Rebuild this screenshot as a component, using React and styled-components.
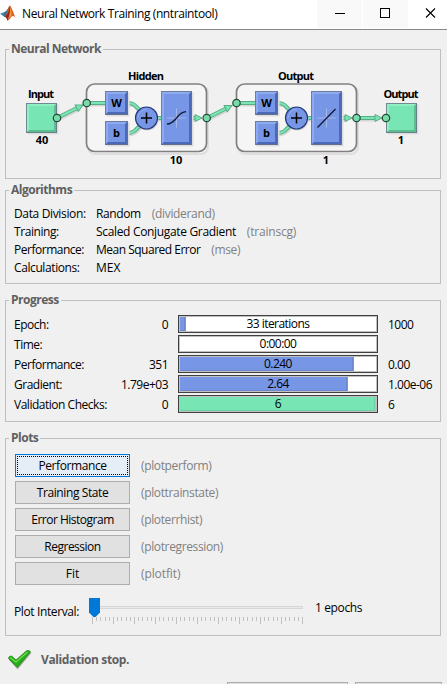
import React from "react";
import styled, { createGlobalStyle } from "styled-components";

const Global = createGlobalStyle`
  * { box-sizing: border-box; }
  body { margin: 0; background: #f0f0f0; overflow: hidden; }
`;

const Window = styled.main`
  width: 447px;
  height: 684px;
  overflow: hidden;
  background: #f0f0f0;
  color: #000;
  font: 12px/18px "Open Sans", "Noto Sans", sans-serif;
  white-space: nowrap;
`;

const TitleBar = styled.header`
  display: flex;
  align-items: flex-start;
  height: 30px;
  background: #fff;
  border-bottom: 1px solid #85888c;
`;

const Logo = styled.svg`
  flex: none;
  margin: 5px 0 0;
`;

const Title = styled.h1`
  flex: 1;
  margin: 0 0 0 6px;
  font-size: 12px;
  font-weight: 400;
  line-height: 27px;
`;

const Controls = styled.div`
  display: flex;
  gap: 1px;
`;

const Control = styled.button`
  width: ${(p) => p.$width || 45}px;
  height: 28px;
  padding: 0;
  border: 0;
  background: ${(p) => (p.$shade ? "#f9f9f9" : "#fff")};
  svg { display: block; }
`;

const Panel = styled.fieldset`
  width: 436px;
  height: ${(p) => p.$height}px;
  min-width: 0;
  margin: ${(p) => p.$top}px 0 0 5px;
  padding: 0;
  border: 1px solid #bfbfbf;
`;

const Legend = styled.legend`
  height: 18px;
  margin-left: 3px;
  padding: 0 2px;
  color: #606060;
  font-weight: 700;
  line-height: 17px;
`;

const Text = styled.span`
  letter-spacing: ${(p) => p.$track ?? -0.38}px;
`;

const Dim = styled(Text)`
  color: #808080;
`;

const Diagram = styled.svg`
  display: block;
  margin-top: 2px;
  text {
    font: 700 11px "Open Sans", "Noto Sans", sans-serif;
    text-anchor: middle;
  }
`;

const Rows = styled.div`
  padding: 6px 0 0 8px;
`;

const InfoRow = styled.div`
  display: grid;
  grid-template-columns: 82px max-content max-content;
  height: 18px;
`;

const InfoNote = styled(Dim)`
  margin-left: 11px;
`;

const Meters = styled.div`
  display: grid;
  grid-template-columns: 90px 64px 200px 50px;
  grid-auto-rows: 18px;
  row-gap: 2px;
  column-gap: 0;
  padding: 6px 0 0 8px;
`;

const MeterLabel = styled(Text)`
  padding-top: 1px;
`;

const Start = styled(MeterLabel)`
  text-align: right;
`;

const End = styled(MeterLabel)`
  margin-left: 20px;
`;

const Bar = styled.div`
  display: grid;
  margin-left: 10px;
  width: 200px;
  height: 18px;
  border: 1px solid #404040;
  background: #fff;
  box-shadow: inset 0 0 0 1px #c0c0c0;
  padding: 1px;
`;

const Fill = styled.div`
  grid-area: 1 / 1;
  width: ${(p) => p.$width}px;
  height: 14px;
  padding: 0 1px 1px 1px;
  background: ${(p) => (p.$green ? "#78e6b4" : "#7896e6")};
  &::after {
    content: "";
    display: block;
    height: 13px;
    border: solid ${(p) => (p.$green ? "#6cd0a2" : "#6c87d0")};
    border-width: 0 1px 1px 0;
  }
`;

const BarText = styled(Text)`
  grid-area: 1 / 1;
  text-align: center;
  line-height: 14px;
`;

const Buttons = styled.div`
  display: grid;
  grid-template-columns: 115px max-content;
  grid-auto-rows: 23px;
  row-gap: 4px;
  column-gap: 11px;
  padding: 7px 0 0 9px;
`;

const PlotButton = styled.button`
  padding: 0;
  border: 1px solid ${(p) => (p.$active ? "#0078d7" : "#adadad")};
  background: ${(p) => (p.$active ? "#e5edf6" : "#e1e1e1")};
  color: #000;
  font: inherit;
  line-height: 21px;
  outline: ${(p) => (p.$active ? "1px dotted #000" : "none")};
  outline-offset: -3px;
`;

const PlotNote = styled(Dim)`
  line-height: 23px;
`;

const IntervalRow = styled.div`
  display: flex;
  padding: 13px 0 0 8px;
`;

const IntervalLabel = styled(Text)`
  width: 75px;
  padding-top: 5px;
`;

const IntervalValue = styled(Text)`
  margin-left: 11px;
  padding-top: 1px;
`;

const Status = styled.div`
  display: flex;
  align-items: center;
  height: 24px;
  margin: 11px 0 0 7px;
  gap: 8px;
  color: #606060;
  font-weight: 700;
`;

const StatusText = styled(Text)`
  padding-top: 2px;
`;

const Footer = styled.footer`
  display: flex;
  gap: 7px;
  margin: 11px 0 0 227px;
`;

const FooterButton = styled.button`
  width: ${(p) => p.$width}px;
  height: 23px;
  border: 1px solid #adadad;
  background: #e1e1e1;
`;

function MatlabLogo() {
  return (
    <Logo width="16" height="16" viewBox="0 0 16 16" aria-hidden="true">
      <path d="M0 8.8 5 6.7 7.5 9 4.6 12Z" fill="#3d8ab8" />
      <path d="M5 6.8C7.2 6 8.3 2 9.8 .5L7.6 9.3 4.6 12 3.2 10.2Z" fill="#466b8c" />
      <path d="M9.8 .4C8.2 3 8 7.2 4.6 12c2-.3 2.2 2.1 3 3.7 2.6-1 3.4-4.6 5.2-4.6 1.2 0 2 .9 2.9 2C13.7 9 11.5 1 9.8 .4Z" fill="#dc5a24" />
      <path d="M9.8 .4C9.2 4 8.8 8.6 4.6 12c2-.3 2.2 2.1 3 3.7C9.8 12 10.2 5 9.8 .4Z" fill="#8c2c28" />
      <path d="M9.8 1c.8 4 .6 8-2 13.5 2-1.5 2.8-3.8 4-4.2C11.4 6 10.8 3 9.8 1Z" fill="#f49c38" />
    </Logo>
  );
}

function Block({ x, y, w, h, green, label }) {
  const [fill, light, dark] = green
    ? ["#78e6b4", "#90efc3", "#5cbd90"]
    : ["#7896e6", "#8eaaf1", "#4c69b8"];
  const d = 3;
  return (
    <g>
      <rect x={x + 1.5} y={y + 1.5} width={w} height={h} fill="#ddd" />
      <rect x={x} y={y} width={w} height={h} fill={fill} />
      <path d={`M${x} ${y + h}V${y}H${x + w}l-${d} ${d}H${x + d}V${y + h - d}Z`} fill={light} />
      <path d={`M${x + w} ${y}V${y + h}H${x}l${d} -${d}H${x + w - d}V${y + d}Z`} fill={dark} />
      <rect x={x + 0.5} y={y + 0.5} width={w - 1} height={h - 1} fill="none" stroke="#687084" strokeOpacity=".8" />
      {label && <text x={x + w / 2} y={y + h / 2 + 4}>{label}</text>}
    </g>
  );
}

function Wire({ d }) {
  return (
    <g fill="none">
      <path d={d} stroke="#d6d6d6" strokeWidth="4" transform="translate(1 1.5)" />
      <path d={d} stroke="#58ad86" strokeWidth="4" />
      <path d={d} stroke="#7be5b5" strokeWidth="2" />
    </g>
  );
}

function Arrow({ x, y, angle = 0 }) {
  return (
    <path
      d="M-7 -3.5 0 0-7 3.5Z"
      transform={`translate(${x} ${y}) rotate(${angle})`}
      fill="#78e6b4"
      stroke="#58ad86"
    />
  );
}

function Port({ x, y }) {
  return <circle cx={x} cy={y} r="3.7" fill="#78dca9" stroke="#26483a" strokeWidth="1.2" />;
}

function Layer({ x, name, size, curve }) {
  return (
    <g transform={`translate(${x} 0)`}>
      <rect x="2" y="86" width="120" height="68" rx="7" fill="none" stroke="#dedede" strokeWidth="2" />
      <rect x=".5" y="84" width="120" height="67.5" rx="8" fill="#f5f5f5" stroke="#808080" strokeWidth="1.7" />
      <text x="60" y="79.5" textLength="36">{name}</text>
      <Wire d="M3 103H20" />
      <Wire d="M41 103C50 103 49 107 54 110" />
      <Wire d="M41 133C50 133 49 129 54 126" />
      <Wire d="M70 118H77" />
      <Wire d="M105 118H111" />
      <Arrow x={116} y={118} />
      <Block x={19} y={91} w={23} h={24} label="W" />
      <Block x={19} y={121} w={23} h={24} label="b" />
      <circle cx="61.5" cy="119.5" r="11" fill="#d4d4d4" />
      <circle cx="60.5" cy="118" r="11" fill="#7896e6" stroke="#253b79" strokeWidth="1.2" />
      <path d="M52 118a8.5 8.5 0 0 1 8.5-8.5" fill="none" stroke="#91acf0" />
      <path d="M55 118h11M60.5 112.500v11" stroke="#000" strokeWidth="1.5" />
      <Block x={75} y={91} w={31} h={54} />
      <path d="M81 118h19M90.5 108.500v19" stroke="#a5b6ea" strokeWidth="1" />
      <path d={curve} fill="none" stroke="#101a38" strokeWidth="1.3" />
      <text x="90" y="164">{size}</text>
    </g>
  );
}

function Network() {
  return (
    <Diagram width="434" height="116" viewBox="6 60 434 116">
      <text x="41" y="98" textLength="26">Input</text>
      <Block x={26} y={103} w={31} h={30} green />
      <text x="42" y="144">40</text>
      <Layer x={86} name="Hidden" size="10" curve="M81 124C86 124 88 121 90.5 118S95 112 100 111.700" />
      <Layer x={236} name="Output" size="1" curve="M81.500 127.500 99.500 109" />
      <text x="401" y="98" textLength="35">Output</text>
      <Block x={386} y={103} w={31} h={30} green />
      <text x="401" y="144">1</text>
      <Wire d="M57 118 79 107" />
      <Arrow x={83} y={105} angle={-26} />
      <Wire d="M207 118 228 107.500" />
      <Arrow x={232} y={105.5} angle={-26} />
      <Wire d="M357 118H376" />
      <Arrow x={382} y={118} />
      <Port x={57} y={118} />
      <Port x={86.7} y={103} />
      <Port x={206.7} y={118} />
      <Port x={236.5} y={103} />
      <Port x={356.5} y={118} />
      <Port x={386} y={118} />
    </Diagram>
  );
}

function Slider() {
  const ticks = Array.from({ length: 51 }, (_, i) => i);
  return (
    <svg width="215" height="27" viewBox="89 598 215 27">
      <rect x="89.5" y="606.5" width="213" height="2" fill="#e7eaea" stroke="#d6d6d6" />
      {ticks.map((i) => (
        <rect key={i} x={Math.round(92 + i * 4.2)} y="617" width="1" height={i % 5 ? 4 : 7} fill="#c0c0c0" />
      ))}
      <path d="M89 598h11v14.500l-4.500 4.500h-2l-4.500-4.500Z" fill="#0078d7" />
    </svg>
  );
}

function Check() {
  return (
    <svg width="26" height="22" viewBox="7 648 26 22">
      <path d="M9 660l3-3.500 4.500 3.500 11-9.500 4 2.500-14 16.500Z" fill="#777" opacity=".55" />
      <path d="M8.5 658.500q0-2.500 3-2.500l4.500 4 10.500-9.200q2.500-1 4 1L17.500 667.500Z" fill="#27ae17" stroke="#16830c" strokeWidth=".7" />
      <path d="M10 657.500l6 4.500 11.500-10" fill="none" stroke="#72dc55" strokeWidth="1.3" />
    </svg>
  );
}

const algorithms = [
  { label: "Data Division:", value: "Random", fn: "(dividerand)", track: [-0.35, -0.38, -0.33] },
  { label: "Training:", value: "Scaled Conjugate Gradient", fn: "(trainscg)", track: [-0.42, -0.33, -0.2] },
  { label: "Performance:", value: "Mean Squared Error", fn: "(mse)", track: [-0.48, -0.5, -0.38] },
  { label: "Calculations:", value: "MEX", fn: "", track: [-0.4, 0, 0] },
];

const progress = [
  { label: "Epoch:", start: "0", value: "33 iterations", end: "1000", fill: 6 },
  { label: "Time:", start: "", value: "0:00:00", end: "", fill: 0 },
  { label: "Performance:", start: "351", value: "0.240", end: "0.00", fill: 174 },
  { label: "Gradient:", start: "1.79e+03", value: "2.64", end: "1.00e-06", fill: 168 },
  { label: "Validation Checks:", start: "0", value: "6", end: "6", fill: 196, green: true },
];

const plots = [
  ["Performance", "(plotperform)", -0.4],
  ["Training State", "(plottrainstate)", -0.4],
  ["Error Histogram", "(ploterrhist)", -0.5],
  ["Regression", "(plotregression)", -0.5],
  ["Fit", "(plotfit)", 0],
];

export default function App() {
  return (
    <Window>
      <Global />
      <TitleBar>
        <MatlabLogo />
        <Title><Text $track={-0.4}>Neural Network Training (nntraintool)</Text></Title>
        <Controls>
          <Control $shade aria-label="Minimize">
            <svg width="45" height="28"><path d="M18 13.500h10" stroke="#000" /></svg>
          </Control>
          <Control $shade aria-label="Maximize">
            <svg width="45" height="28"><rect x="17.5" y="8.5" width="9" height="9" fill="none" stroke="#000" /></svg>
          </Control>
          <Control $width={38} aria-label="Close">
            <svg width="38" height="28"><path d="M17 8.500l9 9m0-9-9 9" stroke="#000" strokeWidth="1.1" /></svg>
          </Control>
        </Controls>
      </TitleBar>

      <Panel $top={10} $height={139}>
        <Legend><Text $track={-0.5}>Neural Network</Text></Legend>
        <Network />
      </Panel>

      <Panel $top={2} $height={103}>
        <Legend><Text $track={-0.5}>Algorithms</Text></Legend>
        <Rows>
          {algorithms.map(({ label, value, fn, track }) => (
            <InfoRow key={label}>
              <Text $track={track[0]}>{label}</Text>
              <Text $track={track[1]}>{value}</Text>
              <InfoNote $track={track[2]}>{fn}</InfoNote>
            </InfoRow>
          ))}
        </Rows>
      </Panel>

      <Panel $top={7} $height={131}>
        <Legend><Text $track={-0.5}>Progress</Text></Legend>
        <Meters>
          {progress.map((row) => (
            <React.Fragment key={row.label}>
              <MeterLabel $track={-0.48}>{row.label}</MeterLabel>
              <Start $track={-0.5}>{row.start}</Start>
              <Bar>
                {row.fill > 0 && <Fill $width={row.fill} $green={row.green} />}
                <BarText $track={-0.55}>{row.value}</BarText>
              </Bar>
              <End $track={-0.5}>{row.end}</End>
            </React.Fragment>
          ))}
        </Meters>
      </Panel>

      <Panel $top={7} $height={207}>
        <Legend><Text $track={-0.5}>Plots</Text></Legend>
        <Buttons>
          {plots.map(([label, fn, track], i) => (
            <React.Fragment key={label}>
              <PlotButton $active={i === 0}><Text $track={track}>{label}</Text></PlotButton>
              <PlotNote $track={fn === "(plotfit)" ? -0.1 : -0.36}>{fn}</PlotNote>
            </React.Fragment>
          ))}
        </Buttons>
        <IntervalRow>
          <IntervalLabel>Plot Interval:</IntervalLabel>
          <Slider />
          <IntervalValue>1 epochs</IntervalValue>
        </IntervalRow>
      </Panel>

      <Status>
        <Check />
        <StatusText>Validation stop.</StatusText>
      </Status>
      <Footer>
        <FooterButton $width={121} aria-label="Stop training" />
        <FooterButton $width={87} aria-label="Cancel" />
      </Footer>
    </Window>
  );
}
